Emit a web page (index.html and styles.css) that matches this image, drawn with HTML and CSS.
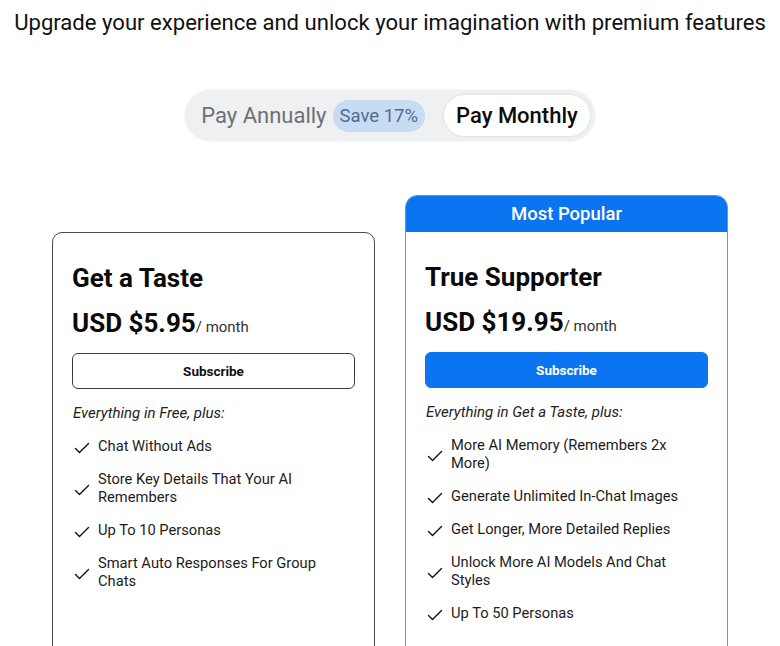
FILE: index.html
```html
<!DOCTYPE html>
<html lang="en">
<head>
<meta charset="utf-8">
<title>Upgrade</title>
<link rel="stylesheet" href="styles.css">
</head>
<body>
<main class="page">
  <h1 class="title">Upgrade your experience and unlock your imagination with premium features</h1>

  <div class="toggle">
    <div class="option option-annual">
      <span class="option-label">Pay Annually</span>
      <span class="badge">Save 17%</span>
    </div>
    <div class="option option-monthly">Pay Monthly</div>
  </div>

  <section class="plans">
    <article class="card card-basic">
      <div class="card-body">
        <h2 class="plan-name">Get a Taste</h2>
        <div class="price"><span class="amount">USD $5.95</span><span class="period">/ month</span></div>
        <button class="btn btn-outline">Subscribe</button>
        <p class="includes">Everything in Free, plus:</p>
        <ul class="features">
          <li><svg class="check" viewBox="0 0 16 12"><polyline points="1.5,6.5 5.5,10.5 14.5,1.5"/></svg><span>Chat Without Ads</span></li>
          <li><svg class="check" viewBox="0 0 16 12"><polyline points="1.5,6.5 5.5,10.5 14.5,1.5"/></svg><span>Store Key Details That Your AI Remembers</span></li>
          <li><svg class="check" viewBox="0 0 16 12"><polyline points="1.5,6.5 5.5,10.5 14.5,1.5"/></svg><span>Up To 10 Personas</span></li>
          <li><svg class="check" viewBox="0 0 16 12"><polyline points="1.5,6.5 5.5,10.5 14.5,1.5"/></svg><span>Smart Auto Responses For Group Chats</span></li>
        </ul>
      </div>
    </article>

    <article class="card card-popular">
      <div class="card-header">Most Popular</div>
      <div class="card-body">
        <h2 class="plan-name">True Supporter</h2>
        <div class="price"><span class="amount">USD $19.95</span><span class="period">/ month</span></div>
        <button class="btn btn-primary">Subscribe</button>
        <p class="includes">Everything in Get a Taste, plus:</p>
        <ul class="features">
          <li><svg class="check" viewBox="0 0 16 12"><polyline points="1.5,6.5 5.5,10.5 14.5,1.5"/></svg><span>More AI Memory (Remembers 2x More)</span></li>
          <li><svg class="check" viewBox="0 0 16 12"><polyline points="1.5,6.5 5.5,10.5 14.5,1.5"/></svg><span>Generate Unlimited In-Chat Images</span></li>
          <li><svg class="check" viewBox="0 0 16 12"><polyline points="1.5,6.5 5.5,10.5 14.5,1.5"/></svg><span>Get Longer, More Detailed Replies</span></li>
          <li><svg class="check" viewBox="0 0 16 12"><polyline points="1.5,6.5 5.5,10.5 14.5,1.5"/></svg><span>Unlock More AI Models And Chat Styles</span></li>
          <li><svg class="check" viewBox="0 0 16 12"><polyline points="1.5,6.5 5.5,10.5 14.5,1.5"/></svg><span>Up To 50 Personas</span></li>
        </ul>
      </div>
    </article>
  </section>
</main>
</body>
</html>
```

FILE: styles.css
```css
* { box-sizing: border-box; }

html, body {
  margin: 0;
  padding: 0;
  background: #ffffff;
}

body {
  font-family: Roboto, "Liberation Sans", Arial, sans-serif;
  color: #111111;
}

.page {
  display: flex;
  flex-direction: column;
  align-items: center;
  padding-top: 8px;
}

.title {
  margin: 0;
  font-size: 22.1px;
  line-height: 28px;
  font-weight: 400;
  color: #111111;
  white-space: nowrap;
}

.toggle {
  margin-top: 54px;
  display: flex;
  align-items: center;
  gap: 7px;
  padding: 5px;
  background: #eef0f2;
  border-radius: 999px;
  box-shadow: 0 0 3px rgba(0, 0, 0, 0.08);
}

.option {
  display: flex;
  align-items: center;
  height: 41px;
  font-size: 22px;
  border-radius: 999px;
}

.option-annual {
  gap: 6px;
  padding: 0 12px 0 11px;
  color: #6c7075;
}

.badge {
  display: inline-flex;
  align-items: center;
  height: 32px;
  padding: 0 7px;
  font-size: 18.5px;
  color: #4f6c8c;
  background: #c7dcf3;
  border-radius: 999px;
}

.option-monthly {
  padding: 0 12px;
  background: #ffffff;
  color: #0d0d0d;
  font-weight: 500;
  box-shadow: 0 0 3px rgba(0, 0, 0, 0.10);
}

.plans {
  margin-top: 54px;
  display: flex;
  align-items: flex-start;
  gap: 30px;
}

.card {
  width: 323px;
  background: #ffffff;
}

.card-basic {
  margin-top: 37px;
  border: 1px solid #4a4a4a;
  border-radius: 10px;
  min-height: 460px;
}

.card-popular {
  border: 1px solid #7895a8;
  border-radius: 12px 12px 10px 10px;
  overflow: hidden;
}

.card-header {
  height: 37px;
  margin: -1px -1px 0;
  display: flex;
  align-items: center;
  justify-content: center;
  background: #0b74f0;
  color: #ffffff;
  font-size: 18.5px;
  font-weight: 500;
}

.card-popular .card-body {
  min-height: 460px;
}

.card-body {
  display: flex;
  flex-direction: column;
  padding: 30px 19px 20px;
}

.plan-name {
  margin: 0;
  font-size: 26px;
  line-height: 30px;
  font-weight: 700;
  color: #0a0a0a;
}

.price {
  margin-top: 15px;
  line-height: 30px;
  color: #0a0a0a;
}

.amount {
  font-size: 26px;
  font-weight: 700;
}

.period {
  font-size: 15px;
  color: #333333;
}

.btn {
  margin-top: 11px;
  height: 36px;
  width: 100%;
  border-radius: 6px;
  font-family: inherit;
  font-size: 13.5px;
  font-weight: 700;
  cursor: pointer;
}

.btn-outline {
  background: #ffffff;
  color: #111111;
  border: 1px solid #3d3d3d;
}

.btn-primary {
  background: #0b74f0;
  color: #ffffff;
  border: 1px solid #0b74f0;
}

.includes {
  margin: 15px 0 0 1px;
  font-size: 15px;
  line-height: 18px;
  font-style: italic;
  color: #222222;
}

.features {
  list-style: none;
  margin: 15px 0 0;
  padding: 0;
  display: flex;
  flex-direction: column;
  gap: 15px;
}

.features li {
  display: flex;
  align-items: center;
  gap: 8px;
  font-size: 14.7px;
  line-height: 18px;
  color: #1c1c1c;
  padding-right: 15px;
}

.check {
  flex: 0 0 16px;
  width: 16px;
  height: 12px;
  margin-left: 2px;
  margin-top: 4px;
}

.check polyline {
  fill: none;
  stroke: #111111;
  stroke-width: 1.4;
  stroke-linecap: round;
  stroke-linejoin: round;
}
```
